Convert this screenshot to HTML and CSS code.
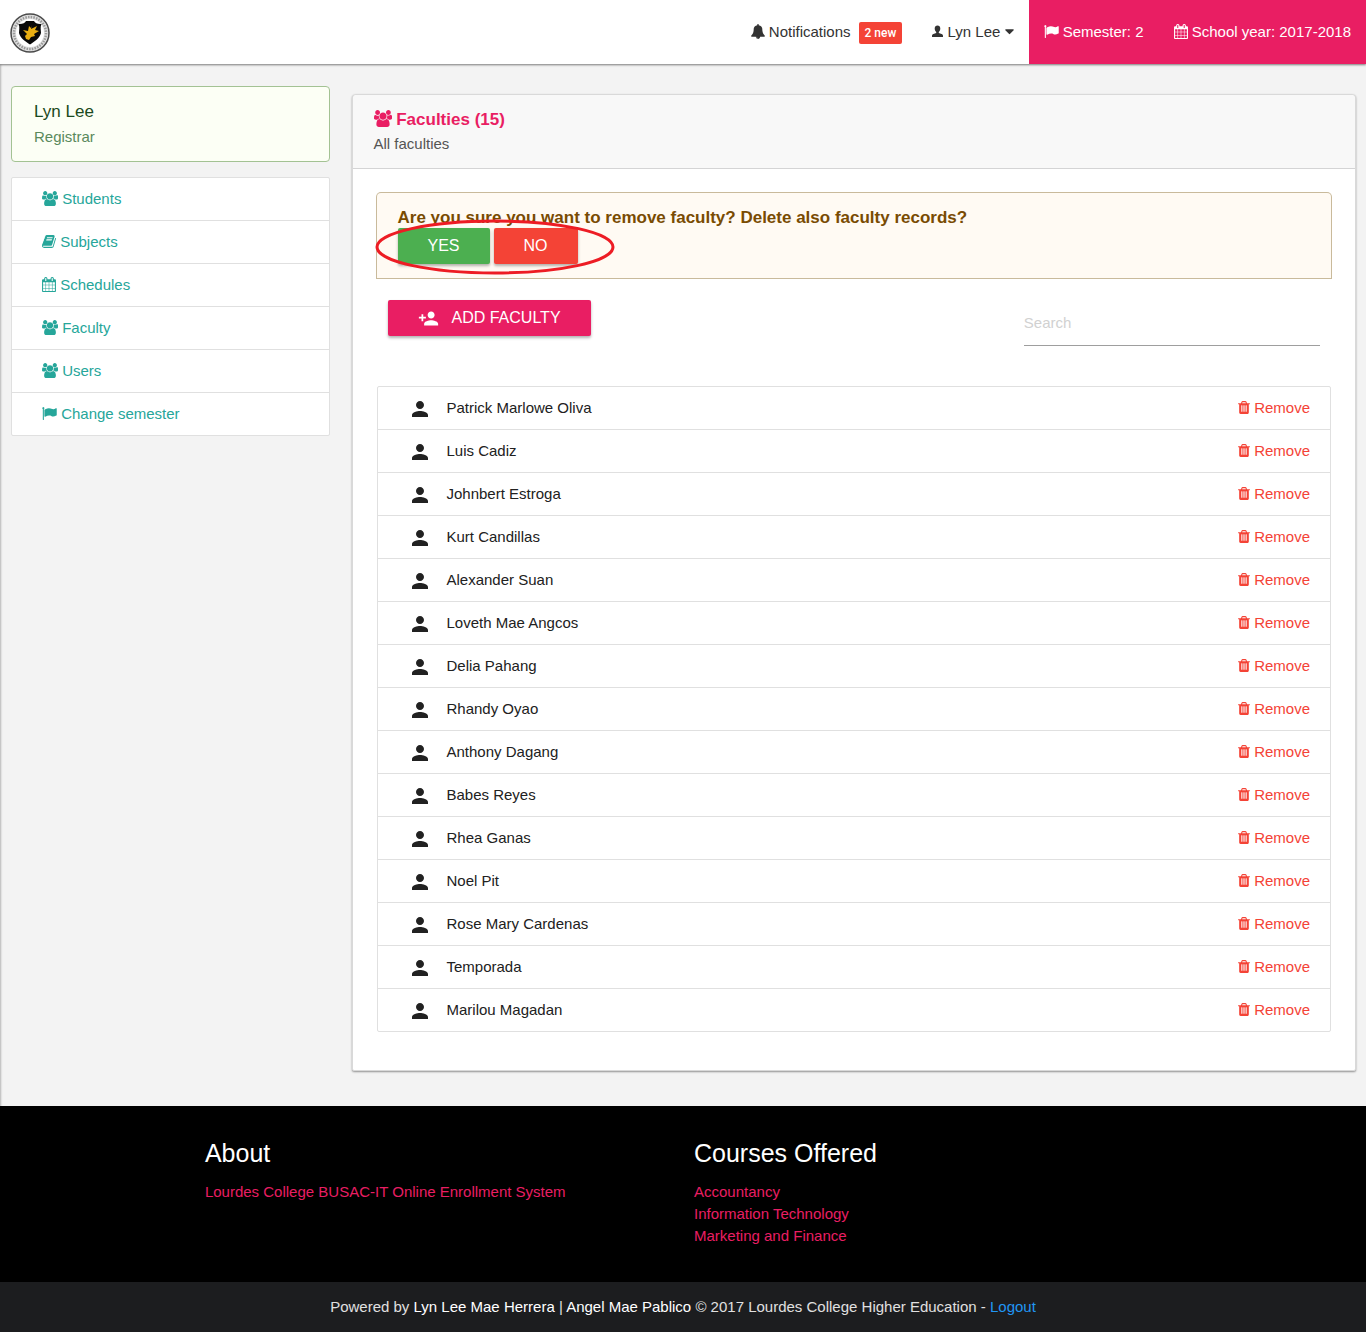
FILE: index.html
```html
<!DOCTYPE html>
<html lang="en">
<head>
<meta charset="utf-8">
<title>Faculties</title>
<link rel="stylesheet" href="styles.css">
</head>
<body>
<svg class="sprite" aria-hidden="true">
  <symbol id="users" viewBox="0 0 1920 1792"><path d="M593 896q-162 5-265 128h-134q-82 0-138-40.500t-56-118.500q0-353 124-353 6 0 43.500 21t97.500 42.500 119 21.500q67 0 133-23-5 37-5 66 0 159 93 283zm1071 637q0 120-73 189.500t-194 69.500h-874q-121 0-194-69.500t-73-189.500q0-53 3.500-103.500t14-109 26.500-108.500 43-97.500 62-81 85.500-53.500 111.500-20q10 0 43 21.500t73 48 107 48 135 21.500 135-21.500 107-48 73-48 43-21.500q61 0 111.500 20t85.500 53.500 62 81 43 97.500 26.500 108.500 14 109 3.500 103.500zm-1024-1277q0 106-75 181t-181 75-181-75-75-181 75-181 181-75 181 75 75 181zm704 384q0 159-112.500 271.500t-271.500 112.500-271.500-112.500-112.500-271.500 112.500-271.500 271.500-112.500 271.500 112.500 112.500 271.500zm576 225q0 78-56 118.500t-138 40.500h-134q-103-123-265-128 93-124 93-283 0-29-5-66 66 23 133 23 59 0 119-21.500t97.500-42.500 43.500-21q124 0 124 353zm-128-609q0 106-75 181t-181 75-181-75-75-181 75-181 181-75 181 75 75 181z"/></symbol>
  <symbol id="calendar" viewBox="64 0 1664 1792"><path d="M192 1664h288v-288h-288v288zm352 0h320v-288h-320v288zm-352-352h288v-320h-288v320zm352 0h320v-320h-320v320zm-352-384h288v-288h-288v288zm736 736h320v-288h-320v288zm-384-736h320v-288h-320v288zm768 736h288v-288h-288v288zm-384-352h320v-320h-320v320zm-352-864v-288q0-13-9.500-22.500t-22.500-9.500h-64q-13 0-22.500 9.500t-9.500 22.500v288q0 13 9.500 22.500t22.500 9.500h64q13 0 22.500-9.500t9.500-22.500zm736 864h288v-320h-288v320zm-384-384h320v-288h-320v288zm384 0h288v-288h-288v288zm32-480v-288q0-13-9.500-22.500t-22.500-9.500h-64q-13 0-22.500 9.500t-9.500 22.500v288q0 13 9.500 22.500t22.500 9.500h64q13 0 22.500-9.500t9.500-22.500zm384-64v1280q0 52-38 90t-90 38h-1408q-52 0-90-38t-38-90v-1280q0-52 38-90t90-38h128v-96q0-66 47-113t113-47h64q66 0 113 47t47 113v96h384v-96q0-66 47-113t113-47h64q66 0 113 47t47 113v96h128q52 0 90 38t38 90z"/></symbol>
  <symbol id="flag" viewBox="64 0 1728 1792"><path d="M320 256q0 72-64 110v1266q0 13-9.500 22.500t-22.500 9.500h-64q-13 0-22.500-9.500t-9.500-22.500v-1266q-64-38-64-110 0-53 37.500-90.500t90.500-37.500 90.500 37.500 37.500 90.500zm1472 64v763q0 25-12.500 38.500t-39.500 27.500q-215 116-369 116-61 0-123.500-22t-108.500-48-115.500-48-142.500-22q-192 0-464 146-17 9-33 9-26 0-45-19t-19-45v-742q0-32 31-55 21-14 79-43 236-120 421-120 107 0 200 29t219 88q38 19 88 19 54 0 117.500-21t110-47 88-47 54.500-21q26 0 45 19t19 45z"/></symbol>
  <symbol id="book" viewBox="64 0 1664 1792"><path d="M1703 478q40 57 18 129l-275 906q-19 64-76.500 107.500t-122.500 43.500h-923q-77 0-148.500-53.500t-99.500-131.500q-24-67-2-127 0-4 3-27t4-37q1-8-3-21.500t-3-19.500q2-11 8-21t16.500-23.500 16.500-23.500q23-38 45-91.500t30-91.500q3-10 .5-30t-.5-28q3-11 17-28t17-23q21-36 42-92t25-90q1-9-2.500-32t.5-28q4-13 22-30.500t22-22.500q19-26 42.500-84.500t27.500-96.500q1-8-3-25.500t-2-26.500q2-8 9-18t18-23 17-21q8-12 16.500-30.500t15-35 16-36 19.500-32 26.500-23.500 36-11.500 47.500 5.500l-1 3q38-9 51-9h761q74 0 114 56t18 130l-274 906q-36 119-71.500 153.500t-128.500 34.500h-869q-27 0-38 15-11 16-1 43 24 70 144 70h923q29 0 56-15.500t35-41.500l300-987q7-22 5-57 38 15 59 43zm-1064 2q-4 13 2 22.500t20 9.500h608q13 0 25.500-9.500t16.500-22.500l21-64q4-13-2-22.500t-20-9.500h-608q-13 0-25.500 9.500t-16.500 22.500zm-83 256q-4 13 2 22.500t20 9.500h608q13 0 25.500-9.500t16.500-22.500l21-64q4-13-2-22.500t-20-9.500h-608q-13 0-25.500 9.500t-16.500 22.500z"/></symbol>
  <symbol id="trash" viewBox="192 0 1408 1792"><path d="M704 1376v-704q0-14-9-23t-23-9h-64q-14 0-23 9t-9 23v704q0 14 9 23t23 9h64q14 0 23-9t9-23zm256 0v-704q0-14-9-23t-23-9h-64q-14 0-23 9t-9 23v704q0 14 9 23t23 9h64q14 0 23-9t9-23zm256 0v-704q0-14-9-23t-23-9h-64q-14 0-23 9t-9 23v704q0 14 9 23t23 9h64q14 0 23-9t9-23zm-544-992h448l-48-117q-7-9-17-11h-317q-10 2-17 11zm928 32v64q0 14-9 23t-23 9h-96v948q0 83-47 143.500t-113 60.500h-832q-66 0-113-58.500t-47-141.500v-952h-96q-14 0-23-9t-9-23v-64q0-14 9-23t23-9h309l70-167q15-37 54-63t79-26h320q40 0 79 26t54 63l70 167h309q14 0 23 9t9 23z"/></symbol>
  <symbol id="user" viewBox="0 0 11 15"><path d="M5.500 1.500c1.700 0 2.800 1.200 2.800 3 0 1.500-.6 2.800-1.500 3.500v1l2.800 1c.9.300 1.400 1 1.400 2v1H0v-1c0-1 .5-1.700 1.400-2l2.800-1V8c-.9-.7-1.500-2-1.500-3.500 0-1.800 1.100-3 2.800-3z"/></symbol>
  <symbol id="bell" viewBox="64 0 1664 1792"><path d="M912 1696q0-16-16-16-59 0-101.500-42.500t-42.500-101.500q0-16-16-16t-16 16q0 73 51.500 124.500t124.500 51.500q16 0 16-16zm816-288q0 52-38 90t-90 38h-448q0 106-75 181t-181 75-181-75-75-181h-448q-52 0-90-38t-38-90q50-42 91-88t85-119.500 74.500-158.500 50-206 19.500-260q0-152 117-282.500t307-158.500q-8-19-8-39 0-40 28-68t68-28 68 28 28 68q0 20-8 39 190 28 307 158.500t117 282.500q0 139 19.500 260t50 206 74.500 158.500 85 119.500 91 88z"/></symbol>
  <symbol id="caret" viewBox="384 0 1024 1792"><path d="M1408 704q0 26-19 45l-448 448q-19 19-45 19t-45-19l-448-448q-19-19-19-45t19-45 45-19h896q26 0 45 19t19 45z"/></symbol>
  <symbol id="person" viewBox="0 0 24 24"><path d="M12 12c2.210 0 4-1.790 4-4s-1.790-4-4-4-4 1.790-4 4 1.790 4 4 4zm0 2c-2.670 0-8 1.340-8 4v2h16v-2c0-2.660-5.330-4-8-4z"/></symbol>
  <symbol id="person-add" viewBox="0 0 24 24"><path d="M15 12c2.210 0 4-1.790 4-4s-1.790-4-4-4-4 1.790-4 4 1.790 4 4 4zm-9-2V7H4v3H1v2h3v3h2v-3h3v-2H6zm9 4c-2.670 0-8 1.340-8 4v2h16v-2c0-2.660-5.330-4-8-4z"/></symbol>
</svg>

<header class="topbar">
  <a class="brand" href="#" aria-label="Home">
    <svg width="40" height="40" viewBox="0 0 40 40" aria-hidden="true">
      <circle cx="20" cy="20" r="19" fill="#dedede" stroke="#4a4a4a" stroke-width="1.500"/>
      <circle cx="20" cy="20" r="16" fill="none" stroke="#999" stroke-width="2.500" stroke-dasharray="1.500 1.200"/>
      <circle cx="20" cy="20" r="14" fill="#fff"/>
      <path d="M16 8h8c1 2 4 3.500 7.500 3-1.500 3-.5 6-.5 9-1 5-7 9-11 11.500C16 29 10 25 9 20c0-3 1-6-.5-9C12 11.500 15 10 16 8z" fill="#090909"/>
      <path d="M22 12l-1 4 6-3-2 4 4 1-5 3 1 2-4 1-2 3-3-1-1-3 2-2-4-4 5 1 1-5 2 2z" fill="#e9ae12"/>
    </svg>
  </a>
  <nav class="topnav">
    <a href="#"><svg class="fa bell"><use href="#bell"/></svg> Notifications<span class="badge">2 new</span></a>
    <a href="#"><svg class="fa user"><use href="#user"/></svg> Lyn Lee <svg class="fa caret"><use href="#caret"/></svg></a>
    <div class="term">
      <a href="#"><svg class="fa flag"><use href="#flag"/></svg> Semester: 2</a>
      <a href="#"><svg class="fa calendar"><use href="#calendar"/></svg> School year: 2017-2018</a>
    </div>
  </nav>
</header>

<main class="page">
  <aside class="side">
    <section class="profile">
      <h2 class="title">Lyn Lee</h2>
      <p>Registrar</p>
    </section>
    <nav class="menu">
      <a href="#"><svg class="fa users"><use href="#users"/></svg> Students</a>
      <a href="#"><svg class="fa book"><use href="#book"/></svg> Subjects</a>
      <a href="#"><svg class="fa calendar"><use href="#calendar"/></svg> Schedules</a>
      <a href="#"><svg class="fa users"><use href="#users"/></svg> Faculty</a>
      <a href="#"><svg class="fa users"><use href="#users"/></svg> Users</a>
      <a href="#"><svg class="fa flag"><use href="#flag"/></svg> Change semester</a>
    </nav>
  </aside>

  <div class="content">
    <section class="card">
      <header class="card-head">
        <h1 class="title"><svg class="fa group"><use href="#users"/></svg> Faculties (15)</h1>
        <p>All faculties</p>
      </header>
      <div class="card-body">
        <div class="confirm">
          <h2 class="title">Are you sure you want to remove faculty? Delete also faculty records?</h2>
          <div class="actions">
            <button class="btn yes" type="button">YES</button>
            <button class="btn no" type="button">NO</button>
          </div>
          <svg class="ring" viewBox="0 0 240 56" aria-hidden="true"><ellipse cx="120" cy="28" rx="118" ry="26" fill="none" stroke="#ed1c24" stroke-width="3"/></svg>
        </div>
        <div class="toolbar">
          <div class="cell"><button class="btn add" type="button"><svg class="mi-add"><use href="#person-add"/></svg>ADD FACULTY</button></div>
          <div class="cell"><input class="search" type="text" placeholder="Search" aria-label="Search"></div>
        </div>
        <ul class="people">
          <li><svg class="mi"><use href="#person"/></svg><span>Patrick Marlowe Oliva</span><a href="#"><svg class="fa trash"><use href="#trash"/></svg> Remove</a></li>
          <li><svg class="mi"><use href="#person"/></svg><span>Luis Cadiz</span><a href="#"><svg class="fa trash"><use href="#trash"/></svg> Remove</a></li>
          <li><svg class="mi"><use href="#person"/></svg><span>Johnbert Estroga</span><a href="#"><svg class="fa trash"><use href="#trash"/></svg> Remove</a></li>
          <li><svg class="mi"><use href="#person"/></svg><span>Kurt Candillas</span><a href="#"><svg class="fa trash"><use href="#trash"/></svg> Remove</a></li>
          <li><svg class="mi"><use href="#person"/></svg><span>Alexander Suan</span><a href="#"><svg class="fa trash"><use href="#trash"/></svg> Remove</a></li>
          <li><svg class="mi"><use href="#person"/></svg><span>Loveth Mae Angcos</span><a href="#"><svg class="fa trash"><use href="#trash"/></svg> Remove</a></li>
          <li><svg class="mi"><use href="#person"/></svg><span>Delia Pahang</span><a href="#"><svg class="fa trash"><use href="#trash"/></svg> Remove</a></li>
          <li><svg class="mi"><use href="#person"/></svg><span>Rhandy Oyao</span><a href="#"><svg class="fa trash"><use href="#trash"/></svg> Remove</a></li>
          <li><svg class="mi"><use href="#person"/></svg><span>Anthony Dagang</span><a href="#"><svg class="fa trash"><use href="#trash"/></svg> Remove</a></li>
          <li><svg class="mi"><use href="#person"/></svg><span>Babes Reyes</span><a href="#"><svg class="fa trash"><use href="#trash"/></svg> Remove</a></li>
          <li><svg class="mi"><use href="#person"/></svg><span>Rhea Ganas</span><a href="#"><svg class="fa trash"><use href="#trash"/></svg> Remove</a></li>
          <li><svg class="mi"><use href="#person"/></svg><span>Noel Pit</span><a href="#"><svg class="fa trash"><use href="#trash"/></svg> Remove</a></li>
          <li><svg class="mi"><use href="#person"/></svg><span>Rose Mary Cardenas</span><a href="#"><svg class="fa trash"><use href="#trash"/></svg> Remove</a></li>
          <li><svg class="mi"><use href="#person"/></svg><span>Temporada</span><a href="#"><svg class="fa trash"><use href="#trash"/></svg> Remove</a></li>
          <li><svg class="mi"><use href="#person"/></svg><span>Marilou Magadan</span><a href="#"><svg class="fa trash"><use href="#trash"/></svg> Remove</a></li>
        </ul>
      </div>
    </section>
  </div>
</main>

<footer class="footer">
  <div class="footer-cols">
    <section>
      <h2>About</h2>
      <ul><li><a href="#">Lourdes College BUSAC-IT Online Enrollment System</a></li></ul>
    </section>
    <section>
      <h2>Courses Offered</h2>
      <ul>
        <li><a href="#">Accountancy</a></li>
        <li><a href="#">Information Technology</a></li>
        <li><a href="#">Marketing and Finance</a></li>
      </ul>
    </section>
  </div>
  <div class="legal">Powered by <a href="#">Lyn Lee Mae Herrera</a> | <a href="#">Angel Mae Pablico</a> © 2017 Lourdes College Higher Education - <a class="logout" href="#">Logout</a></div>
</footer>
</body>
</html>
```
FILE: styles.css
```css
* { box-sizing: border-box; }

body {
  margin: 0;
  background: #f3f3f3;
  color: #212121;
  font: 15px/22px "Liberation Sans", Arial, sans-serif;
}

h1, h2, p, ul { margin: 0; padding: 0; }
ul { list-style: none; }
a { color: inherit; text-decoration: none; }
.sprite { display: none; }

/* Icons */
.fa { width: 14px; height: 15px; vertical-align: -2px; fill: currentColor; }
.fa.users { width: 16px; }
.fa.flag { width: 15px; }
.fa.trash { width: 12px; }
.fa.user { width: 11px; }
.fa.caret { width: 9px; }
.fa.group { width: 18px; height: 17px; }
.mi { width: 24px; height: 24px; fill: currentColor; }
.mi-add { width: 21px; height: 21px; margin-right: 13px; fill: currentColor; }

/* Top bar */
.topbar {
  position: relative;
  display: flex;
  align-items: center;
  justify-content: space-between;
  height: 64px;
  background: #fff;
  box-shadow: 0 1px 2px rgba(0, 0, 0, .5);
}
.brand { display: flex; margin-left: 10px; padding-top: 2px; }
.topnav, .term { display: flex; line-height: 64px; }
.topnav a { padding: 0 15px; color: #333; white-space: nowrap; }
.term { background: #e91e63; }
.topnav .term a { color: #fff; }
.badge {
  display: inline-block;
  margin-left: 8px;
  padding: 0 6px;
  border-radius: 2px;
  background: #f44336;
  color: #fff;
  font: 500 12px/22px Roboto, sans-serif;
}

/* Page columns */
.page {
  display: grid;
  grid-template-columns: 1fr 3fr;
  align-items: start;
  padding: 22px 0 35px;
  box-shadow: inset 3px 0 2px -2px rgba(0, 0, 0, .25);
}
.side { padding: 0 12px 0 11px; }
.content { min-width: 0; padding: 8px 10px 0; }
.title { font-size: 17px; line-height: 20px; }

.profile {
  display: grid;
  gap: 5px;
  margin-bottom: 15px;
  padding: 15px 22px 14px;
  border: 1px solid #a3c293;
  border-radius: 4px;
  background: #fcfff5;
  color: #5a8a5c;
  line-height: 20px;
}
.profile .title { color: #1b4a20; font-weight: 400; }

.menu {
  border: 1px solid #e0e0e0;
  border-radius: 2px;
  background: #fff;
  color: #26a69a;
}
.menu a { display: block; padding: 10px 30px; }
.menu a + a { border-top: 1px solid #e0e0e0; }

/* Card */
.card {
  border: 1px solid #d9d9d9;
  border-radius: 4px 4px 2px 2px;
  background: #fff;
  box-shadow: 0 1px 2px rgba(0, 0, 0, .4);
}
.card-head {
  display: grid;
  gap: 4px;
  padding: 15px 21px 14px;
  border-bottom: 1px solid #d4d4d5;
  border-radius: 4px 4px 0 0;
  background: #f8f8f8;
  color: #545454;
  line-height: 20px;
}
.card-head .title { color: #e91e63; }
.card-body { padding: 24px 24px 38px; }

.confirm {
  position: relative;
  margin-bottom: 22px;
  padding: 15px 21px 14px;
  border-radius: 4px 4px 0 0;
  background: #fffaf3;
  box-shadow: 0 0 0 1px #c9ba9b;
}
.confirm .title { color: #794b02; }
.actions { display: flex; gap: 4px; }
.ring {
  position: absolute;
  top: 26px;
  left: -2px;
  width: 240px;
  height: 56px;
  pointer-events: none;
}

.btn {
  display: flex;
  align-items: center;
  height: 36px;
  padding: 0 30px;
  border: 0;
  border-radius: 2px;
  color: #fff;
  font: 16px/36px "Liberation Sans", Arial, sans-serif;
  box-shadow: 0 2px 3px rgba(0, 0, 0, .3);
}
.yes { background: #4caf50; }
.no { background: #f44336; }
.add { background: #e91e63; }

.toolbar { display: grid; grid-template-columns: 2fr 1fr; margin-bottom: 40px; }
.cell { padding: 0 11px; }
.search {
  display: block;
  width: 100%;
  height: 46px;
  padding: 0;
  border: 0;
  border-bottom: 1px solid #9e9e9e;
  background: none;
  font: inherit;
}
.search::placeholder { color: #d1d1d1; }

.people { border: 1px solid #e0e0e0; border-radius: 2px; }
.people li { display: flex; align-items: center; padding: 0 20px 0 30px; line-height: 42px; }
.people li + li { border-top: 1px solid #e0e0e0; }
.people .mi { margin: 2px 15px 0 0; }
.people a { margin-left: auto; color: #f44336; }

/* Footer */
.footer { background: #000; color: #e0e0e0; }
.footer-cols {
  display: grid;
  grid-template-columns: 1fr 1fr;
  gap: 22px;
  width: 70%;
  margin: 0 auto;
  padding: 32px 0 35px;
}
.footer h2 { margin-bottom: 13px; color: #fff; font-size: 25px; font-weight: 400; line-height: 30px; }
.footer li { color: #e91e63; }
.legal { padding: 0 20px; background: #1c1d1f; line-height: 50px; text-align: center; }
.legal a { color: #fff; }
.legal .logout { color: #2196f3; }
```
